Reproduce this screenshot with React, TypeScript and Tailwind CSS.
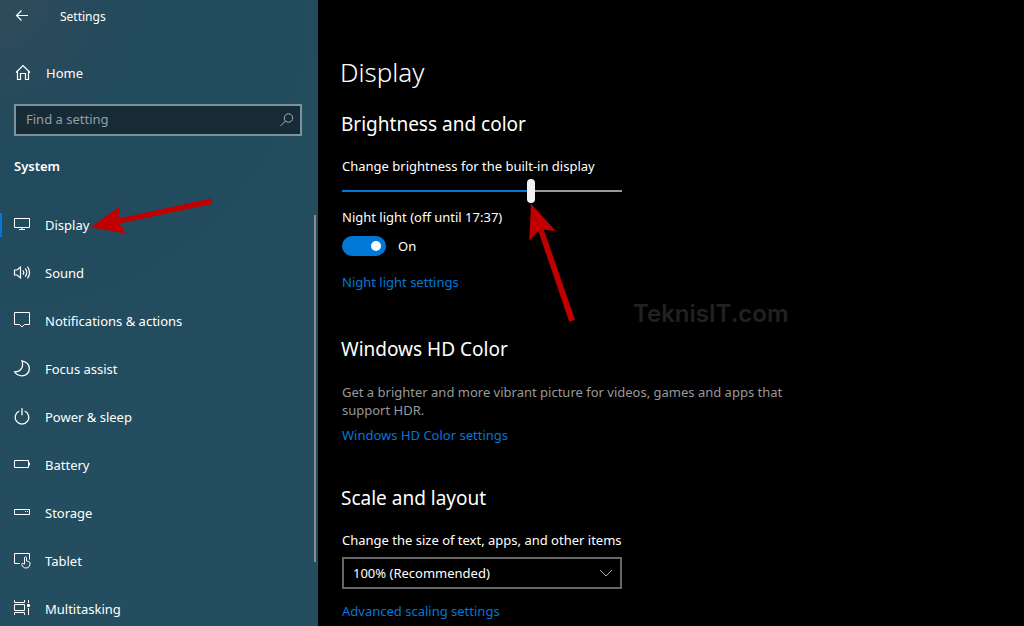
import { useState } from 'react'
import type { ReactNode } from 'react'

interface NavItem {
  label: string
  icon: ReactNode
}

const NAV: NavItem[] = [
  {
    label: 'Display',
    icon: (
      <>
        <path d="M1.5 2.5h15v9h-15z" />
        <path d="M9 11.5v2M6 13.5h6" />
      </>
    ),
  },
  {
    label: 'Sound',
    icon: (
      <g strokeWidth="1.2">
        <path d="M1.5 6H4l3.5-3v11L4 11H1.5z" />
        <path d="M10 6.3c1 1.4 1 3 0 4.4M12.2 4.4c1.9 2.4 1.9 5.8 0 8.2M14.4 2.5c2.8 3.5 2.8 8.5 0 12" />
      </g>
    ),
  },
  {
    label: 'Notifications & actions',
    icon: <path d="M1.5 .5h15v12h-5L9 15l-2.5-2.5h-5z" />,
  },
  {
    label: 'Focus assist',
    icon: (
      <path
        d="M9 .8c4.3.9 7.3 4 7.3 7.9 0 4-3.1 7.1-7.3 7.1-3.3 0-5.8-1.4-7.3-3.8C7.8 11.7 11 7 9 .8z"
        strokeWidth="1.3"
      />
    ),
  },
  {
    label: 'Power & sleep',
    icon: (
      <g strokeWidth="1.3">
        <path d="M6.3 3A6.8 6.8 0 1 0 11.7 3" />
        <path d="M9 .3v7" />
      </g>
    ),
  },
  {
    label: 'Battery',
    icon: (
      <>
        <path d="M1.5 4.5h14v7h-14z" />
        <path d="M16.5 6.5v3" />
      </>
    ),
  },
  {
    label: 'Storage',
    icon: (
      <>
        <path d="M1.5 5.5h15v5h-15z" />
        <path d="M12 7.5h1M14 7.5h1" />
      </>
    ),
  },
  {
    label: 'Tablet',
    icon: (
      <>
        <path d="M7 11.5H1.5v-10h15v6" />
        <path d="M11.5 12V5.7c0-1.3 2-1.3 2 0V9l2.2.5c.8.2 1.3.7 1.3 1.5 0 3.3-1.2 5-4 5-2.3 0-3.5-1.4-4.2-3.3-.3-1 .5-1.7 1.3-1.2z" />
      </>
    ),
  },
  {
    label: 'Multitasking',
    icon: (
      <>
        <path d="M1.5 4.5h10v6h-10zM1.5 0v2.5h10V0M1.5 15v-2.5h10V15M15.5 0v3M15.5 8v7" />
        <path d="M14.5 4.5h2v2h-2z" fill="currentColor" />
      </>
    ),
  },
]

const LINK = 'text-[#0078d7] hover:text-gray-400'

function Glyph({ children }: { children: ReactNode }) {
  return (
    <svg viewBox="0 0 18 18" className="size-[18px] shrink-0" fill="none" stroke="currentColor" aria-hidden="true">
      {children}
    </svg>
  )
}

function Sidebar() {
  const [active, setActive] = useState('Display')

  return (
    <aside className="flex w-[318px] shrink-0 flex-col bg-[#234c5e] bg-[radial-gradient(circle_at_top_left,#304b5a,#224a5d_140px,#244e5f_600px)]">
      <header className="flex h-8 items-center gap-7 pl-[14px] text-xs">
        <button type="button" aria-label="Back">
          <Glyph>
            <path d="M14 8.5H2.5M7.5 3.5l-5 5 5 5" strokeWidth="1.2" />
          </Glyph>
        </button>
        <span className="pt-[2px]">Settings</span>
      </header>

      <a href="#home" className="mt-[21px] flex h-10 items-center gap-[14px] pl-[14px]">
        <Glyph>
          <path d="M2 8.5l7-7 7 7M3.5 7.5v8h3v-6h5v6h3v-8" strokeWidth="1.2" />
        </Glyph>
        Home
      </a>

      <div className="mt-[11px] mr-4 ml-[14px] flex h-8 items-center border-2 border-[#7c929c] bg-[#162b36] pr-1 pl-[10px]">
        <input
          type="text"
          aria-label="Find a setting"
          placeholder="Find a setting"
          className="h-full min-w-0 flex-1 bg-transparent pb-[2px] outline-none placeholder:text-[#93a0a7]"
        />
        <svg viewBox="0 0 18 18" className="size-[18px] text-[#a3b0b6]" fill="none" stroke="currentColor" aria-hidden="true">
          <circle cx="10.5" cy="7" r="4.2" />
          <path d="M7.5 10l-5 5" />
        </svg>
      </div>

      <h2 className="mt-5 pl-[14px] font-semibold">System</h2>

      <nav className="relative mt-[25px] min-h-0 flex-1">
        <ul>
          {NAV.map(({ label, icon }) => (
            <li key={label} className="relative">
              <a
                href={`#${label}`}
                onClick={() => setActive(label)}
                aria-current={label === active ? 'page' : undefined}
                className="flex h-12 items-center gap-[14px] pl-[13px]"
              >
                {label === active && <span className="absolute left-0 h-6 w-[2px] bg-[#0078d7]" />}
                <Glyph>{icon}</Glyph>
                {label}
              </a>
              {label === 'Display' && (
                <svg
                  viewBox="0 0 124 38"
                  className="pointer-events-none absolute -top-1 left-[90px] h-[38px] w-[124px]"
                  fill="#c00000"
                  aria-hidden="true"
                >
                  <path d="M.7 30.3L30.3 9.3 28.3 21.5 120.7 1.5 122 7 29.5 26.5 36.3 36.7z" />
                </svg>
              )}
            </li>
          ))}
        </ul>
        <span className="absolute top-[14px] right-[2px] bottom-16 w-[2px] bg-[#8c8c8c]" />
      </nav>
    </aside>
  )
}

function BrightnessSlider() {
  const [value, setValue] = useState(68)
  const track = `linear-gradient(to right, #0078d7 ${value}%, #999999 ${value}%)`

  return (
    <div className="relative mt-[3px] h-6 w-[280px]">
      <input
        id="brightness"
        type="range"
        value={value}
        onChange={(e) => setValue(Number(e.target.value))}
        className="block h-6 w-full appearance-none bg-[length:100%_2px] bg-center bg-no-repeat outline-none [&::-webkit-slider-thumb]:h-6 [&::-webkit-slider-thumb]:w-2 [&::-webkit-slider-thumb]:appearance-none [&::-webkit-slider-thumb]:rounded-full [&::-webkit-slider-thumb]:bg-[#f2f2f2]"
        style={{ backgroundImage: track }}
      />
      <svg
        viewBox="0 0 50 122"
        className="pointer-events-none absolute top-6 left-[186px] h-[122px] w-[50px]"
        fill="#c00000"
        aria-hidden="true"
      >
        <path d="M3 .7L28 28.3 15.7 26.5 47 116.7 41.3 119 10.3 28 1.3 37.7z" />
      </svg>
    </div>
  )
}

function DisplaySettings() {
  const [nightLight, setNightLight] = useState(true)

  return (
    <main className="relative min-w-0 flex-1 bg-black pt-[54px] pl-6">
      <h1 className="-ml-[2px] text-[26px] leading-9 font-light">Display</h1>

      <section>
        <h2 className="mt-5 -ml-px text-[19px] leading-7">Brightness and color</h2>
        <label htmlFor="brightness" className="mt-[18px] block">
          Change brightness for the built-in display
        </label>
        <BrightnessSlider />
        <p className="mt-1">Night light (off until 17:37)</p>
        <label className="mt-[9px] flex items-center gap-3">
          <input
            type="checkbox"
            role="switch"
            aria-label="Night light"
            checked={nightLight}
            onChange={(e) => setNightLight(e.target.checked)}
            className="flex h-5 w-11 appearance-none items-center rounded-full bg-[#666666] px-[5px] before:size-[10px] before:rounded-full before:bg-white checked:justify-end checked:bg-[#0078d7]"
          />
          {nightLight ? 'On' : 'Off'}
        </label>
        <a href="#night-light" className={`mt-4 block w-fit ${LINK}`}>
          Night light settings
        </a>
      </section>

      <section>
        <h2 className="mt-[43px] -ml-px text-[19px] leading-7">Windows HD Color</h2>
        <p className="mt-5 max-w-[460px] leading-[18px] text-[#999999]">
          Get a brighter and more vibrant picture for videos, games and apps that support HDR.
        </p>
        <a href="#hd-color" className={`mt-[6px] block w-fit ${LINK}`}>
          Windows HD Color settings
        </a>
      </section>

      <section>
        <h2 className="mt-[39px] -ml-px text-[19px] leading-7">Scale and layout</h2>
        <label htmlFor="scale" className="mt-[18px] block">
          Change the size of text, apps, and other items
        </label>
        <div className="mt-[7px] grid w-[280px] items-center">
          <select
            id="scale"
            className="col-start-1 row-start-1 h-8 appearance-none border-2 border-[#666666] bg-black pl-[9px] outline-none"
          >
            <option>100% (Recommended)</option>
            <option>125%</option>
            <option>150%</option>
          </select>
          <svg
            viewBox="0 0 14 8"
            className="pointer-events-none col-start-1 row-start-1 mr-[9px] h-2 w-[14px] justify-self-end text-[#b0b0b0]"
            fill="none"
            stroke="currentColor"
            aria-hidden="true"
          >
            <path d="M1 1l6 6 6-6" />
          </svg>
        </div>
        <a href="#scaling" className={`mt-3 block w-fit ${LINK}`}>
          Advanced scaling settings
        </a>
      </section>

      <span className="pointer-events-none absolute top-[298px] left-[315px] font-[Inter] text-2xl leading-8 font-semibold text-[#212121]">
        TeknisIT.com
      </span>
    </main>
  )
}

export default function App() {
  return (
    <div className="flex h-screen overflow-hidden bg-black font-['Noto_Sans','Open_Sans',sans-serif] text-[13px] leading-5 text-white">
      <Sidebar />
      <DisplaySettings />
    </div>
  )
}
